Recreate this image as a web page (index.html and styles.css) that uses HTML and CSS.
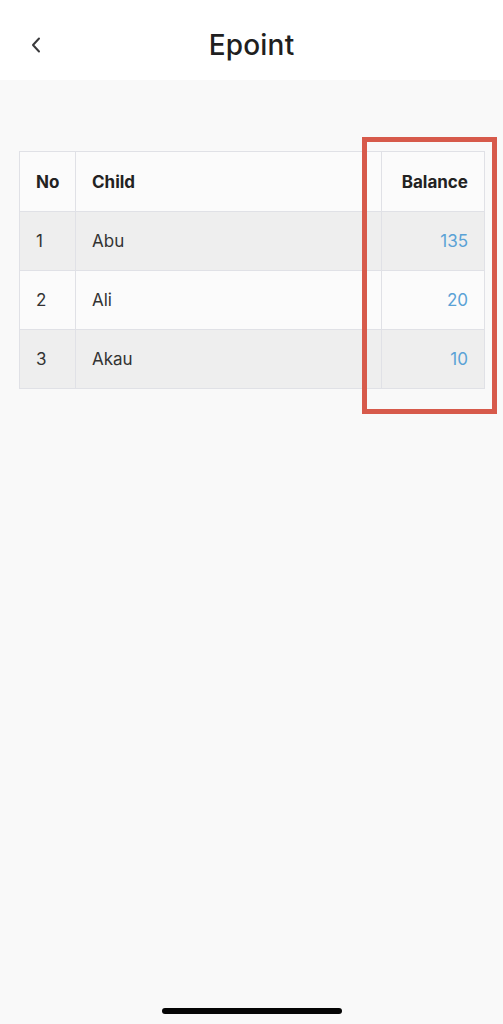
FILE: index.html
```html
<!DOCTYPE html>
<html>
<head>
<meta charset="utf-8">
<link rel="stylesheet" href="styles.css">
</head>
<body>
<div class="page">
  <header class="topbar">
    <span class="back">
      <svg width="10" height="16" viewBox="0 0 10 16"><path d="M8 1.5 L2 8 L8 14.5" fill="none" stroke="#3a3a3c" stroke-width="2" stroke-linecap="round" stroke-linejoin="round"/></svg>
    </span>
    <h1 class="title">Epoint</h1>
  </header>
  <main class="content">
    <div class="table-wrap">
      <table class="grid">
        <thead>
          <tr><th class="c-no">No</th><th class="c-child">Child</th><th class="c-bal">Balance</th></tr>
        </thead>
        <tbody>
          <tr class="odd"><td>1</td><td>Abu</td><td class="num">135</td></tr>
          <tr><td>2</td><td>Ali</td><td class="num">20</td></tr>
          <tr class="odd"><td>3</td><td>Akau</td><td class="num">10</td></tr>
        </tbody>
      </table>
      <div class="highlight"></div>
    </div>
  </main>
  <div class="home-indicator"></div>
</div>
</body>
</html>
```
FILE: styles.css
```css
* { box-sizing: border-box; }
html, body { margin: 0; padding: 0; }
body {
  background: #f9f9f9;
  font-family: Inter, "Liberation Sans", sans-serif;
  color: #2b2b2b;
}
.page {
  min-height: 1024px;
  display: flex;
  flex-direction: column;
}
.topbar {
  height: 80px;
  background: #ffffff;
  display: flex;
  align-items: center;
  justify-content: center;
  position: relative;
}
.back {
  position: absolute;
  left: 31px;
  top: 37px;
  display: flex;
}
.title {
  margin: 0;
  font-size: 28px;
  font-weight: 500;
  color: #1f1f21;
  letter-spacing: 0.2px;
  position: relative;
  top: 5px;
}
.content {
  padding: 71px 19px 0 19px;
}
.table-wrap {
  position: relative;
}
.grid {
  width: 465px;
  border-collapse: collapse;
  font-size: 17px;
  table-layout: fixed;
}
.grid th, .grid td {
  border: 1px solid #e0e1e6;
  padding: 0 16px;
  text-align: left;
}
.grid th {
  height: 60px;
  font-weight: 700;
  color: #222;
  background: #fbfbfb;
}
.grid td {
  height: 59px;
  color: #333;
  background: #fbfbfb;
}
.grid tr.odd td { background: #eeeeee; }
.c-no { width: 56px; }
.c-child { width: 306px; }
.c-bal { width: 103px; text-align: right !important; }
.grid td.num {
  text-align: right;
  color: #5aa2d6;
}
.highlight {
  position: absolute;
  left: 343px;
  top: -14px;
  width: 135px;
  height: 277px;
  border: 5px solid #d75a4b;
}
.home-indicator {
  margin: auto auto 10px;
  width: 180px;
  height: 6px;
  border-radius: 3px;
  background: #050505;
}
```
